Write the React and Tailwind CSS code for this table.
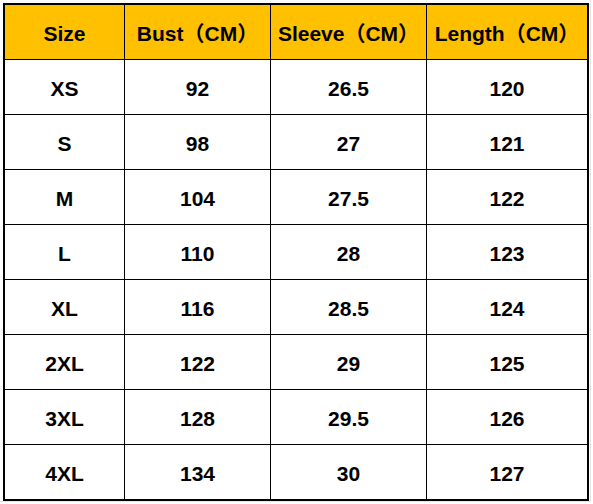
import React from 'react'

const headers = ['Size', 'Bust（CM）', 'Sleeve（CM）', 'Length（CM）']

const rows = [
  ['XS', '92', '26.5', '120'],
  ['S', '98', '27', '121'],
  ['M', '104', '27.5', '122'],
  ['L', '110', '28', '123'],
  ['XL', '116', '28.5', '124'],
  ['2XL', '122', '29', '125'],
  ['3XL', '128', '29.5', '126'],
  ['4XL', '134', '30', '127'],
]

const font = { fontFamily: '"Liberation Sans", Arial, "Noto Sans CJK SC", sans-serif' }

const App = () => {
  return (
    <div className="w-[593px] h-[504px] bg-white" style={font}>
      <div className="w-[591px] h-[502px] border-r border-b border-[#e4e4e4] pl-[3px] pt-[3px]">
        <div className="w-[586px] grid grid-cols-[119px_145px_155px_160px] auto-rows-[54px] gap-px bg-black border-2 border-black">
          {headers.map((h) => (
            <div
              key={h}
              className="bg-[#ffc000] flex items-center justify-center pt-[3px] text-[21px] font-bold text-black"
            >
              {h}
            </div>
          ))}
          {rows.map((row) =>
            row.map((cell, i) => (
              <div
                key={row[0] + i}
                className="bg-white flex items-center justify-center pt-[4px] text-[21px] font-bold text-black"
              >
                {cell}
              </div>
            ))
          )}
        </div>
      </div>
    </div>
  )
}

export default App
